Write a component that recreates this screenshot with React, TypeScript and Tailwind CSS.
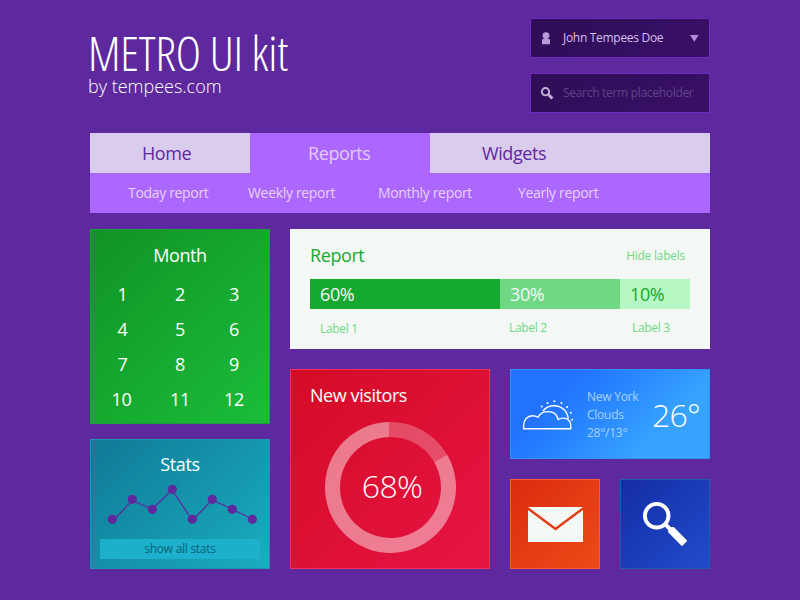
const MONTHS = [1, 2, 3, 4, 5, 6, 7, 8, 9, 10, 11, 12];

const POINTS = [
  [22.3, 80.3],
  [42.3, 60.3],
  [62.3, 70.3],
  [82.3, 50.3],
  [102.3, 80.3],
  [122.3, 60.3],
  [142.3, 70.3],
  [162.3, 80.3],
];

function Header() {
  return (
    <header className="flex h-[133px] justify-between">
      <div className="pt-[29px] text-white">
        <h1 className="-ml-[2px] whitespace-nowrap text-[48px] leading-[48px] font-light tracking-[-0.18px] [font-stretch:75%]">METRO UI kit</h1>
        <p className="-ml-[2px] whitespace-nowrap text-[18px] leading-[18px] font-light">by tempees.com</p>
      </div>
      <div className="flex w-[180px] flex-col gap-[15px] pt-[18px]">
        <button className="flex h-10 items-center border border-[#6d2bbf] bg-linear-135 from-[#2e0e56] to-[#390f67] pl-[11px] pr-[10px]">
          <svg width="9" height="13" viewBox="0 0 9 13" fill="#b99bdc">
            <circle cx="4" cy="3.6" r="3.4" />
            <path d="M2.5 5.5H5.5V7H7Q8 7 8 8V12.3H0V8Q0 7 1 7H2.5Z" />
          </svg>
          <span className="ml-[12px] flex-1 whitespace-nowrap text-left text-[12px] tracking-[-0.3px] text-[#d6bff2]">John Tempees Doe</span>
          <svg width="9" height="7" viewBox="0 0 9 7" fill="#b08cd8">
            <path d="M0 0H8.6L4.3 6.8Z" />
          </svg>
        </button>
        <div className="flex h-10 items-center border border-[#6d2bbf] bg-linear-135 from-[#2e0e56] to-[#390f67] pl-[10px]">
          <svg width="13" height="13" viewBox="0 0 13 13" fill="none" stroke="#c3b3d6">
            <circle cx="4.5" cy="4.7" r="3.6" strokeWidth="2" />
            <path d="M7 7L9 9" strokeWidth="2" />
            <path d="M8.1 8.2L11.4 11.5" strokeWidth="3" />
          </svg>
          <span className="ml-[9px] whitespace-nowrap text-[12px] tracking-[-0.3px] text-[#624585]">Search term placeholder</span>
        </div>
      </div>
    </header>
  );
}

function Nav() {
  return (
    <nav className="h-20 whitespace-nowrap bg-[#ac67ff]">
      <div className="flex h-10 text-[18px] leading-[40px] tracking-[-0.42px]">
        <a className="w-40 bg-[#daccec] pl-[52px] text-[#5f289f]">Home</a>
        <a className="w-[180px] pl-[58px] text-[#e2cdf8]">Reports</a>
        <a className="flex-1 bg-[#daccec] pl-[52px] text-[#5f289f]">Widgets</a>
      </div>
      <div className="flex h-10 pl-[38px] text-[14px] leading-[39px] tracking-[-0.33px] text-[#e6d3fb]">
        <a className="w-[120px]">Today report</a>
        <a className="w-[130px]">Weekly report</a>
        <a className="w-[140px]">Monthly report</a>
        <a>Yearly report</a>
      </div>
    </nav>
  );
}

function MonthTile() {
  return (
    <section className="h-[195px] border border-[#1d9e3c] bg-linear-135 from-[#119325] to-[#1abd3a] text-center text-[18px] text-white">
      <h2 className="pt-[8px] leading-[35px] tracking-[-0.4px]">Month</h2>
      <div className="-ml-px mt-[4px] grid grid-cols-[63px_54px_54px] leading-[35px] tracking-[-0.2px]">
        {MONTHS.map((m) => (
          <span key={m} className={m < 10 && m % 3 === 1 ? "pl-[2px]" : ""}>
            {m}
          </span>
        ))}
      </div>
    </section>
  );
}

function StatsTile() {
  return (
    <section className="grid h-[130px] grid-cols-1 grid-rows-1 border border-[#1896b0] bg-linear-135 from-[#107a97] to-[#1aadbd] text-center">
      <svg className="col-start-1 row-start-1 -ml-px -mt-px" width="180" height="130" viewBox="0 0 180 130">
        <path d="M23 82L42 61.5L62 70L82 51L102.5 81.5L122 61L142 70L162 80" fill="none" stroke="#5f289f" strokeWidth="1.3" />
        {POINTS.map(([x, y]) => (
          <circle key={x} cx={x} cy={y} r="4.6" fill="#5f289f" />
        ))}
      </svg>
      <div className="col-start-1 row-start-1 flex flex-col justify-between px-[9px] pt-[12px] pb-[9px]">
        <h2 className="text-[18px] leading-[25px] tracking-[-0.4px] text-white">Stats</h2>
        <a className="h-5 bg-[#1cb0cc] text-[12px] leading-[20px] tracking-[-0.27px] text-[#0c6378]">show all stats</a>
      </div>
    </section>
  );
}

function ReportTile() {
  return (
    <section className="h-[120px] whitespace-nowrap bg-[#f3f8f5] px-5 pt-[14px]">
      <div className="flex items-center justify-between leading-[25px]">
        <h2 className="text-[18px] tracking-[-0.42px] text-[#18a832]">Report</h2>
        <a className="mr-[5px] text-[12px] tracking-[-0.25px] text-[#6fd884]">Hide labels</a>
      </div>
      <div className="mt-[11px] flex h-[30px] text-[18px] leading-[31px] tracking-[-0.4px]">
        <span className="w-[190px] bg-[#16a92f] pl-[10px] text-[#f3f8f5]">60%</span>
        <span className="w-[120px] bg-[#70d884] pl-[10px] text-[#f3f8f5]">30%</span>
        <span className="w-[70px] bg-[#b7f7c4] pl-[10px] text-[#16a92f]">10%</span>
      </div>
      <div className="mt-[10px] flex text-[12px] leading-[18px] tracking-[-0.3px] text-[#6fd884]">
        <span className="w-[189px] pt-px pl-[10px]">Label 1</span>
        <span className="w-[123px] pl-[10px]">Label 2</span>
        <span className="pl-[10px]">Label 3</span>
      </div>
    </section>
  );
}

function VisitorsTile() {
  return (
    <section className="h-[200px] w-[200px] border border-[#f0325a] bg-linear-135 from-[#d50b26] to-[#e61442] text-white">
      <h2 className="pt-[13px] pl-[19px] text-[18px] leading-[25px] tracking-[-0.43px]">New visitors</h2>
      <div className="mt-[14px] ml-[34px] grid h-[131px] w-[131px] place-items-center">
        <svg className="col-start-1 row-start-1" width="131" height="131" viewBox="0 0 131 131" fill="white">
          <path fillOpacity="0.25" d="M64 0A65.5 65.5 0 0 1 122.2 32.7L109.2 40.2A50.5 50.5 0 0 0 64 15Z" />
          <path fillOpacity="0.45" d="M122.2 32.7A65.5 65.5 0 1 1 64 0V15A50.5 50.5 0 1 0 109.2 40.2Z" />
        </svg>
        <span className="col-start-1 row-start-1 mb-[4px] ml-[3px] text-[32px] leading-[32px] font-light tracking-[-0.7px]">68%</span>
      </div>
    </section>
  );
}

function WeatherTile() {
  return (
    <section className="flex h-[90px] items-center whitespace-nowrap border border-[#3592f8] bg-linear-135 from-[#2372ff] from-25% to-[#38a3ff] to-75%">
      <svg className="mt-[3px] ml-[11px]" width="52" height="32" viewBox="-0.4 -0.5 52 32" fill="none" stroke="white">
        <path strokeWidth="1.4" d="M1.2 28.2V25.2C1.2 19.2 5 15.2 10 15.2C12.2 15.2 14 15.8 15.7 16.7C17.5 13 21 11.1 25.6 11.1C30.6 11.1 34.6 13.7 35.8 19C37.5 17.9 39 17.6 41 17.6C45.5 17.6 48.3 20.7 48.3 24.7V28.2Z" />
        <path strokeWidth="1.4" d="M20.3 10.7C23 7 27 5.2 31.7 5.2C39.2 5.2 45 10.5 45.8 18.3" />
        <g fill="white" stroke="none">
          <circle cx="19.4" cy="6.1" r="1" />
          <circle cx="25.1" cy="2.4" r="1" />
          <circle cx="32" cy="0.8" r="1" />
          <circle cx="39" cy="2.4" r="1" />
          <circle cx="44.7" cy="6.4" r="1" />
          <circle cx="48.4" cy="12.3" r="1" />
          <circle cx="49.8" cy="19.3" r="1" />
        </g>
      </svg>
      <div className="mt-[2px] ml-[13px] w-[65px] text-[12px] leading-[18px] tracking-[-0.25px] text-[#a9d0ff]">
        <p>New York</p>
        <p>Clouds</p>
        <p>28°/13°</p>
      </div>
      <span className="mt-[2px] text-[32px] leading-[32px] font-light tracking-[-0.8px] text-white">26°</span>
    </section>
  );
}

function MailTile() {
  return (
    <section className="flex h-[90px] w-[90px] items-center justify-center border border-[#fa5a34] bg-linear-135 from-[#dc2b0f] to-[#ec4a17]">
      <svg width="55" height="35" viewBox="0 0 55 35">
        <path d="M0 0H55V35H0Z" fill="#f3f8f5" />
        <path d="M-1 .8L27.5 22L56 .8" fill="none" stroke="#e43a13" strokeWidth="2.5" />
      </svg>
    </section>
  );
}

function SearchTile() {
  return (
    <section className="h-[90px] w-[90px] border border-[#1b5fae] bg-linear-135 from-[#152da5] to-[#214bcb]">
      <svg className="-mt-px -ml-px" width="90" height="90" viewBox="0 0 90 90" fill="none" stroke="white">
        <circle cx="36.7" cy="36.7" r="11.8" strokeWidth="3.9" />
        <path d="M44.8 44.8L52 52" strokeWidth="4" />
        <path d="M48.2 51.5V53.3L61.2 66.4Q62 67.2 62.8 66.4L66.6 62.6Q67.4 61.8 66.6 61L53.8 48H51.5Z" fill="white" stroke="none" />
      </svg>
    </section>
  );
}

export default function App() {
  return (
    <div className="h-[600px] w-[800px] overflow-hidden bg-[#5e289e] font-['Open_Sans','Liberation_Sans',sans-serif]">
      <div className="mx-auto w-[620px]">
        <Header />
        <Nav />
        <main className="mt-4 flex gap-5">
          <div className="flex w-[180px] flex-col gap-[15px]">
            <MonthTile />
            <StatsTile />
          </div>
          <div className="flex w-[420px] flex-col gap-5">
            <ReportTile />
            <div className="flex gap-5">
              <VisitorsTile />
              <div className="flex w-[200px] flex-col gap-5">
                <WeatherTile />
                <div className="flex gap-5">
                  <MailTile />
                  <SearchTile />
                </div>
              </div>
            </div>
          </div>
        </main>
      </div>
    </div>
  );
}
